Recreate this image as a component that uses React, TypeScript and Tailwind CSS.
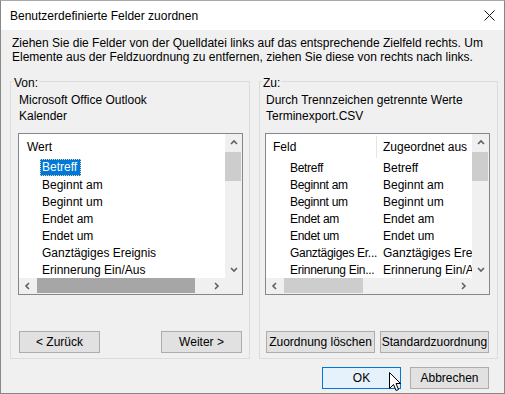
const leftRows = [
  'Betreff',
  'Beginnt am',
  'Beginnt um',
  'Endet am',
  'Endet um',
  'Ganztägiges Ereignis',
  'Erinnerung Ein/Aus',
]

const rightRows: [string, string][] = [
  ['Betreff', 'Betreff'],
  ['Beginnt am', 'Beginnt am'],
  ['Beginnt um', 'Beginnt um'],
  ['Endet am', 'Endet am'],
  ['Endet um', 'Endet um'],
  ['Ganztägiges Er...', 'Ganztägiges Ereignis'],
  ['Erinnerung Ein...', 'Erinnerung Ein/Aus'],
]

function Chevron({ dir }: { dir: 'up' | 'down' | 'left' | 'right' }) {
  const pts = {
    up: '1,5 4,2 7,5',
    down: '1,2 4,5 7,2',
    left: '5,1 2,4 5,7',
    right: '2,1 5,4 2,7',
  }[dir]
  const vertical = dir === 'up' || dir === 'down'
  return (
    <svg width={vertical ? 8 : 7} height={vertical ? 7 : 8} viewBox={vertical ? '0 0 8 7' : '0 0 7 8'}>
      <polyline points={pts} fill="none" stroke="#606060" strokeWidth="1.6" />
    </svg>
  )
}

function VScroll() {
  return (
    <div className="flex w-[17px] flex-col bg-[#f0f0f0]">
      <div className="flex h-[17px] items-center justify-center">
        <Chevron dir="up" />
      </div>
      <div className="mt-[1px] h-[29px] w-[16px] bg-[#cdcdcd]" />
      <div className="flex-1" />
      <div className="flex h-[17px] items-center justify-center">
        <Chevron dir="down" />
      </div>
    </div>
  )
}

function HScroll({ thumbLeft, thumbWidth, dark }: { thumbLeft: number; thumbWidth: number; dark?: boolean }) {
  return (
    <div className="flex h-[16px] bg-[#f0f0f0]">
      <div className="flex flex-1">
        <div className="flex w-[17px] items-center justify-center">
          <Chevron dir="left" />
        </div>
        <div className="relative flex-1">
          <div
            className={`absolute top-0 h-[15px] ${dark ? 'bg-[#a6a6a6]' : 'bg-[#cdcdcd]'}`}
            style={{ left: thumbLeft, width: thumbWidth }}
          />
        </div>
        <div className="flex w-[17px] items-center justify-center">
          <Chevron dir="right" />
        </div>
      </div>
      <div className="w-[17px]" />
    </div>
  )
}

function Button({ label, className = '' }: { label: string; className?: string }) {
  return (
    <div
      className={`flex h-[22px] items-center justify-center border border-[#adadad] bg-[#e1e1e1] ${className}`}
    >
      {label}
    </div>
  )
}

function GroupBox({ label, className = '', children }: { label: string; className?: string; children: React.ReactNode }) {
  return (
    <div className={`relative h-[278px] border border-[#dcdcdc] ${className}`}>
      <span className="absolute -top-[7px] left-[2px] bg-[#f0f0f0] px-[1px]">{label}</span>
      {children}
    </div>
  )
}

export default function App() {
  return (
    <div className="relative h-[394px] w-[505px] bg-white font-['Liberation_Sans',Arial,sans-serif] text-[12px] leading-[16px] text-black">
      <div className="flex h-[394px] w-[505px] flex-col border border-[#888888] border-t-[#aaaaaa] bg-[#f0f0f0]">
        {/* title bar */}
        <div className="flex h-[29px] items-center justify-between bg-white pl-[9px] pr-[9px]">
          <span>Benutzerdefinierte Felder zuordnen</span>
          <svg width="11" height="11" viewBox="0 0 11 11">
            <path d="M0.5 0.5 L10.5 10.5 M10.5 0.5 L0.5 10.5" stroke="#111" strokeWidth="1" />
          </svg>
        </div>

        <div className="flex flex-1 flex-col pl-[9px] pr-[6px] pt-[6px]">
          <p className="pl-[2px] leading-[14px]">
            <span className="block whitespace-nowrap">
              Ziehen Sie die Felder von der Quelldatei links auf das entsprechende Zielfeld rechts. Um
            </span>
            <span className="block whitespace-nowrap">
              Elemente aus der Feldzuordnung zu entfernen, ziehen Sie diese von rechts nach links.
            </span>
          </p>

          <div className="mt-[17px] flex gap-[9px]">
            {/* Von */}
            <GroupBox label="Von:" className="w-[240px]">
              <div className="pl-[8px] pt-[10px]">
                <div>Microsoft Office Outlook</div>
                <div>Kalender</div>
              </div>
              <div className="ml-[7px] mt-[9px] flex h-[162px] w-[225px] flex-col border border-[#828790] bg-white">
                <div className="flex min-h-0 flex-1">
                  <div className="flex-1 overflow-hidden">
                    <div className="flex h-[25px] items-center pl-[8px]">Wert</div>
                    {leftRows.map((r, i) => (
                      <div key={r} className="flex h-[17px] items-center whitespace-nowrap pl-[21px]">
                        <span
                          className={
                            i === 0
                              ? 'bg-[#0078d7] pl-[2px] pr-[4px] leading-[17px] text-white outline outline-1 -outline-offset-1 outline-dotted outline-[#f5d79a]'
                              : 'px-[2px]'
                          }
                        >
                          {r}
                        </span>
                      </div>
                    ))}
                  </div>
                  <VScroll />
                </div>
                <HScroll thumbLeft={1} thumbWidth={158} dark />
              </div>
              <div className="mt-[36px] flex justify-between pl-[8px] pr-[7px]">
                <Button label="< Zurück" className="w-[81px]" />
                <Button label="Weiter >" className="w-[81px]" />
              </div>
            </GroupBox>

            {/* Zu */}
            <GroupBox label="Zu:" className="w-[239px]">
              <div className="pl-[6px] pt-[10px]">
                <div>Durch Trennzeichen getrennte Werte</div>
                <div>Terminexport.CSV</div>
              </div>
              <div className="ml-[5px] mt-[9px] flex h-[162px] w-[225px] flex-col border border-[#828790] bg-white">
                <div className="flex min-h-0 flex-1">
                  <div className="flex-1 overflow-hidden">
                    <div className="flex h-[25px] items-center">
                      <div className="w-[110px] pl-[7px]">Feld</div>
                      <div className="h-[22px] w-[1px] bg-[#e5e5e5]" />
                      <div className="whitespace-nowrap pl-[6px]">Zugeordnet aus</div>
                    </div>
                    {rightRows.map(([a, b]) => (
                      <div key={b} className="flex h-[17px] items-center whitespace-nowrap">
                        <div className="w-[111px] overflow-hidden pl-[24px] tracking-[-0.3px]">{a}</div>
                        <div className="w-[95px] overflow-hidden pl-[6px]">{b}</div>
                      </div>
                    ))}
                  </div>
                  <VScroll />
                </div>
                <HScroll thumbLeft={1} thumbWidth={79} />
              </div>
              <div className="mt-[36px] flex gap-[5px] pl-[6px]">
                <Button label="Zuordnung löschen" className="w-[109px]" />
                <Button label="Standardzuordnung" className="w-[109px]" />
              </div>
            </GroupBox>
          </div>

          <div className="mr-[9px] mt-[8px] flex justify-end gap-[9px]">
            <div className="flex h-[22px] w-[79px] items-center justify-center border border-[#0078d7] bg-[#e5f1fb]">
              OK
            </div>
            <Button label="Abbrechen" className="w-[79px]" />
          </div>
        </div>
      </div>

      {/* mouse pointer over OK */}
      <svg className="absolute left-[388px] top-[371px]" width="13" height="21" viewBox="0 0 13 21">
        <path
          d="M1.5 1.5 L1.5 17.5 L5.5 13.5 L8 19.5 L10.5 18.5 L8 12.5 L12.5 12.5 Z"
          fill="#fff"
          stroke="#000"
          strokeWidth="1"
          strokeLinejoin="miter"
        />
      </svg>
    </div>
  )
}
